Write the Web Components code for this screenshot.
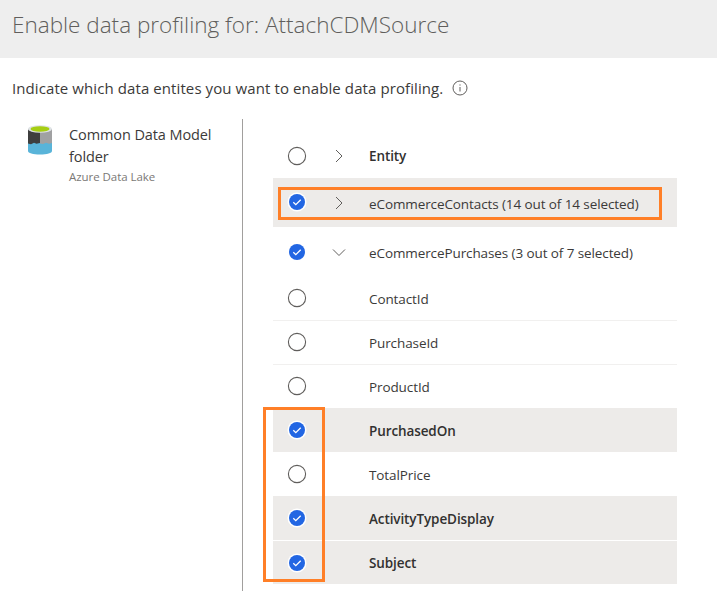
<!DOCTYPE html>
<html><head><meta charset="utf-8"><style>
html,body{margin:0;padding:0;background:#fff}
body{width:717px;height:591px;overflow:hidden;font-family:"Open Sans","Noto Sans",sans-serif;color:#323130}
</style></head><body>
<profile-page></profile-page>
<template id="rowt"><style>
:host{display:flex;align-items:center;height:var(--h,44px);box-sizing:border-box;font-size:13.5px;letter-spacing:-.1px;color:#3b3a39}
:host([sel]){background:#edebe9}
:host([divider]){border-top:1px solid #f1f0ef}
:host([gap]){border-bottom:1px solid #fff}
:host([bold]){font-weight:600;color:#323130}
.c{width:48px;display:flex;justify-content:center;flex:none;margin-top:var(--ct,0)}
.e{width:36px;margin-right:12px;display:flex;justify-content:center;flex:none;margin-top:var(--et,0)}
.x{padding-top:var(--tt,1px);display:block}
svg{display:block}
</style><div class="c" id="c"></div><div class="e" id="e"></div><span class="x"><slot></slot></span></template>
<script>
const check='<svg width="20" height="20" viewBox="0 0 20 20"><circle cx="10" cy="10" r="9.5" fill="#fff"/><circle cx="10" cy="10" r="8" fill="#2266e3"/><path d="M6.300 10.300l2.500 2.400 4.900-5" fill="none" stroke="#fff" stroke-width="1.3"/></svg>';
const ring='<svg width="20" height="20" viewBox="0 0 20 20"><circle cx="10" cy="10" r="8.6" fill="#fff" stroke="#605e5c" stroke-width="1.1"/></svg>';
const right='<svg width="12" height="14" viewBox="0 0 12 14"><path d="M3 1L9 7 3 13" fill="none" stroke="#605e5c" stroke-width="1"/></svg>';
const down='<svg width="14" height="12" viewBox="0 0 14 12"><path d="M1 3.500L7 9.500l6-6" fill="none" stroke="#605e5c" stroke-width="1"/></svg>';
class DataRow extends HTMLElement{constructor(){super();const s=this.attachShadow({mode:'open'});s.appendChild(document.getElementById('rowt').content.cloneNode(true));
 s.getElementById('c').innerHTML=this.hasAttribute('checked')?check:ring;
 const x=this.getAttribute('exp');s.getElementById('e').innerHTML=x==='r'?right:x==='d'?down:'';}}
customElements.define('data-row',DataRow);
class SourcePanel extends HTMLElement{constructor(){super();this.attachShadow({mode:'open'}).innerHTML=`<style>
:host{display:flex;width:243px;box-sizing:border-box;border-right:1px solid #a19f9d;padding:0 0 0 28px;gap:17px;flex:none}
.t{font-size:14.5px;line-height:22px;letter-spacing:-.1px;color:#3b3a39;padding-top:5px;width:155px}
.s{font-size:11.5px;line-height:14px;padding-top:2px;color:#7a7876;letter-spacing:-.05px}
svg{display:block;margin-top:6px;flex:none}
</style><svg width="24" height="30" viewBox="0 0 24 30">
<path d="M0 4v22c0 2 5 3.500 12 3.500S24 28 24 26V4z" fill="#59b4d9"/>
<path d="M0 4v14.500l3 .8 3-1.500 2.500 1 3.500-.8V4z" fill="#3e3e3e"/>
<path d="M12 4v14.500l3 .6 3-1.300 3 1 3-.800V4z" fill="#a0a1a2"/>
<ellipse cx="12" cy="4" rx="12" ry="3.800" fill="#dfe3e5"/><ellipse cx="12" cy="4" rx="9.500" ry="2.700" fill="#a6ce12"/>
</svg><div><div class="t">Common Data Model folder</div><div class="s">Azure Data Lake</div></div>`}}
customElements.define('source-panel',SourcePanel);
class ProfilePage extends HTMLElement{constructor(){super();this.attachShadow({mode:'open'}).innerHTML=`<style>
:host{display:block;position:relative;height:591px;overflow:hidden}
header{height:58px;background:#eee;box-sizing:border-box;padding:0 0 9px 12px;display:flex;align-items:center;font-size:22.5px;font-weight:300;letter-spacing:0;color:#605e5c;white-space:nowrap}
.q{height:61px;box-sizing:border-box;padding:20px 0 0 12px;font-size:15px;letter-spacing:.09px;color:#3b3a39;display:flex;gap:9px;align-items:flex-start;line-height:20px}
.q svg{margin-top:2px}
.m{display:flex;height:472px}
.l{flex:none;width:404px;margin-left:30px;padding-top:15px}
.o{position:absolute;border:3px solid #ff7f27;box-sizing:border-box;pointer-events:none}
.o1{left:278px;top:187px;width:384px;height:33px}
.o2{left:263px;top:407px;width:62px;height:175px}
</style>
<header>Enable data profiling for: AttachCDMSource</header>
<div class="q"><span>Indicate which data entites you want to enable data profiling.</span><svg width="16" height="16" viewBox="0 0 16 16"><circle cx="8" cy="8" r="7" fill="none" stroke="#605e5c"/><path d="M8 7v4.500M8 4.400v1.200" stroke="#605e5c" fill="none"/></svg></div>
<div class="m"><source-panel></source-panel><div class="l">
<data-row exp="r" bold style="--tt:0px">Entity</data-row>
<data-row exp="r" checked sel style="--h:49px;--ct:-1px;--et:1px;--tt:3px">eCommerceContacts (14 out of 14 selected)</data-row>
<data-row exp="d" checked style="--h:49px;--et:1px;--ct:1px;--tt:3px">eCommercePurchases (3 out of 7 selected)</data-row>
<data-row style="--tt:2px">ContactId</data-row>
<data-row divider style="--ct:-2px">PurchaseId</data-row>
<data-row divider style="--ct:-2px">ProductId</data-row>
<data-row checked sel bold>PurchasedOn</data-row>
<data-row>TotalPrice</data-row>
<data-row checked sel bold gap style="--h:45px">ActivityTypeDisplay</data-row>
<data-row checked sel bold style="--h:43px">Subject</data-row>
</div></div>
<div class="o o1"></div><div class="o o2"></div>`}}
customElements.define('profile-page',ProfilePage);
</script>
</body></html>
